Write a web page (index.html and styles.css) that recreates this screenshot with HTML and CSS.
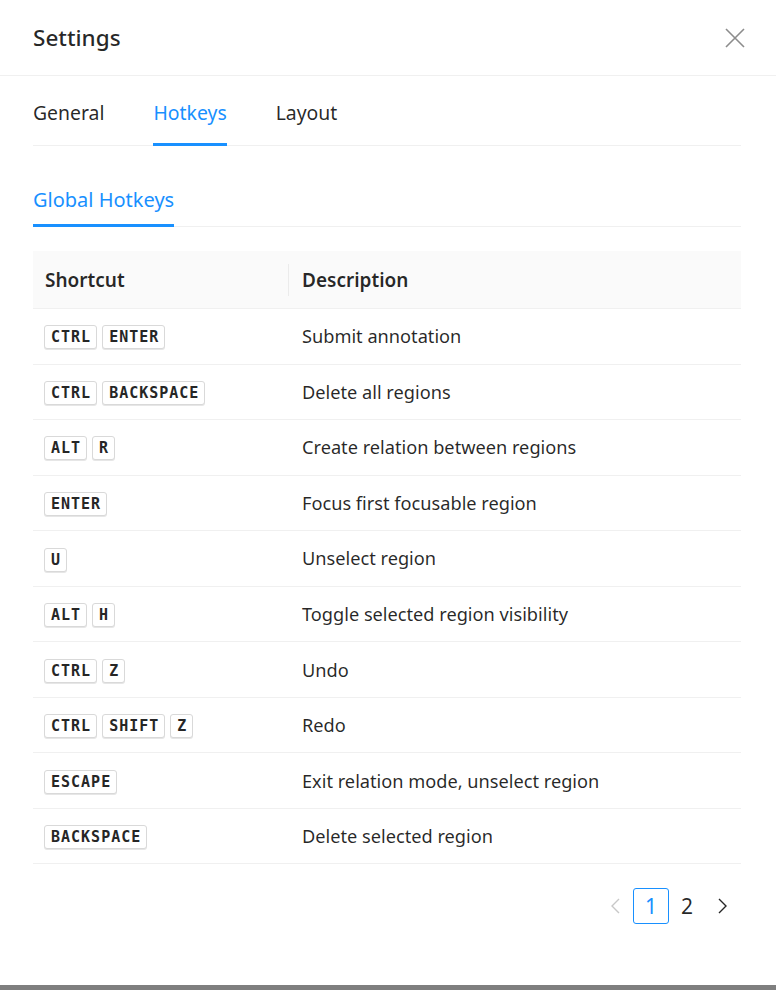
FILE: index.html
```html
<!DOCTYPE html>
<html lang="en">

<head>
    <meta charset="UTF-8">
    <meta name="viewport" content="width=device-width, initial-scale=1.0">
    <title>Settings</title>
    <link rel="stylesheet" href="styles.css">
</head>

<body>
    <div class="modal">
        <div class="modal-header">
            <div class="modal-title">Settings</div>
            <button class="modal-close" aria-label="Close">
                <svg width="20" height="20" viewBox="0 0 20 20">
                    <path d="M1 1 L19 19 M19 1 L1 19" stroke="#8c8c8c" stroke-width="1.6" fill="none" />
                </svg>
            </button>
        </div>
        <div class="modal-body">
            <div class="tabs main">
                <div class="tab">General</div>
                <div class="tab active">Hotkeys</div>
                <div class="tab">Layout</div>
            </div>

            <div class="tabs sub">
                <div class="tab active">Global Hotkeys</div>
            </div>

            <table class="hotkeys">
                <thead>
                    <tr>
                        <th class="col-key">Shortcut</th>
                        <th>Description</th>
                    </tr>
                </thead>
                <tbody>
                    <tr>
                        <td><kbd>CTRL</kbd><kbd>ENTER</kbd></td>
                        <td>Submit annotation</td>
                    </tr>
                    <tr>
                        <td><kbd>CTRL</kbd><kbd>BACKSPACE</kbd></td>
                        <td>Delete all regions</td>
                    </tr>
                    <tr>
                        <td><kbd>ALT</kbd><kbd>R</kbd></td>
                        <td>Create relation between regions</td>
                    </tr>
                    <tr>
                        <td><kbd>ENTER</kbd></td>
                        <td>Focus first focusable region</td>
                    </tr>
                    <tr>
                        <td><kbd>U</kbd></td>
                        <td>Unselect region</td>
                    </tr>
                    <tr>
                        <td><kbd>ALT</kbd><kbd>H</kbd></td>
                        <td>Toggle selected region visibility</td>
                    </tr>
                    <tr>
                        <td><kbd>CTRL</kbd><kbd>Z</kbd></td>
                        <td>Undo</td>
                    </tr>
                    <tr>
                        <td><kbd>CTRL</kbd><kbd>SHIFT</kbd><kbd>Z</kbd></td>
                        <td>Redo</td>
                    </tr>
                    <tr>
                        <td><kbd>ESCAPE</kbd></td>
                        <td>Exit relation mode, unselect region</td>
                    </tr>
                    <tr>
                        <td><kbd>BACKSPACE</kbd></td>
                        <td>Delete selected region</td>
                    </tr>
                </tbody>
            </table>

            <ul class="pagination">
                <li class="page-item arrow disabled">
                    <svg width="12" height="16" viewBox="0 0 12 16">
                        <path d="M10 1 L3 8 L10 15" stroke="currentColor" stroke-width="1.4" fill="none" />
                    </svg>
                </li>
                <li class="page-item active">1</li>
                <li class="page-item">2</li>
                <li class="page-item arrow">
                    <svg width="12" height="16" viewBox="0 0 12 16">
                        <path d="M2 1 L9 8 L2 15" stroke="currentColor" stroke-width="1.4" fill="none" />
                    </svg>
                </li>
            </ul>
        </div>
    </div>
    <div class="backdrop"></div>
</body>

</html>
```

FILE: styles.css
```css
body {
    margin: 0;
    font-family: "Noto Sans", sans-serif;
    color: rgba(0, 0, 0, 0.85);
    background: #fff;
}

.modal {
    height: 985px;
    background: #fff;
}

.modal-header {
    display: flex;
    align-items: center;
    justify-content: space-between;
    height: 75px;
    padding: 0 31px 0 33px;
    border-bottom: 1px solid #f0f0f0;
}

.modal-title {
    font-size: 22.5px;
    font-weight: 500;
}

.modal-close {
    border: none;
    background: none;
    padding: 0;
    display: flex;
    cursor: pointer;
}

.modal-body {
    padding: 0 35px 0 33px;
}

/* tabs */

.tabs {
    display: flex;
    align-items: flex-end;
    gap: 49px;
    border-bottom: 1px solid #f0f0f0;
}

.tab {
    line-height: 28px;
    border-bottom: 3px solid transparent;
    margin-bottom: -1px;
}

.tab.active {
    color: #1890ff;
    border-bottom-color: #1890ff;
}

.tabs.main {
    height: 69px;
}

.tabs.main .tab {
    font-size: 19.4px;
    padding-bottom: 16px;
}

.tabs.sub {
    height: 80px;
}

.tabs.sub .tab {
    font-size: 20px;
    padding-bottom: 10px;
}

/* table */

.hotkeys {
    width: 100%;
    border-collapse: collapse;
    margin-top: 24px;
    font-size: 18.2px;
}

.hotkeys th {
    background: #fafafa;
    text-align: left;
    font-weight: 600;
    font-size: 19px;
    height: 57px;
    padding: 0 12px;
    border-bottom: 1px solid #f0f0f0;
    position: relative;
}

.hotkeys th.col-key {
    width: 232px;
}

.hotkeys th.col-key::after {
    content: "";
    position: absolute;
    right: 0;
    top: 50%;
    height: 32px;
    margin-top: -16px;
    border-right: 1px solid #ebebeb;
}

.hotkeys td {
    height: 54.56px;
    padding: 0 12px 0 11px;
    border-bottom: 1px solid #f0f0f0;
}

.hotkeys td + td,
.hotkeys th + th {
    padding-left: 13px;
}

kbd {
    display: inline-block;
    font-family: "DejaVu Sans Mono", monospace;
    font-weight: bold;
    font-size: 15px;
    letter-spacing: 1px;
    line-height: 22px;
    padding: 0 5px 0 6px;
    margin-right: 5px;
    border: 1px solid #d9d9d9;
    border-radius: 3px;
    background: #fff;
    box-shadow: 0 1px 0 #e6e6e6;
    color: #262626;
    vertical-align: middle;
}

/* pagination */

.pagination {
    list-style: none;
    display: flex;
    justify-content: flex-end;
    align-items: center;
    margin: 24px 0 0;
    padding: 0;
    font-size: 21px;
}

.page-item {
    width: 34px;
    height: 34px;
    display: flex;
    align-items: center;
    justify-content: center;
    border: 1px solid transparent;
    border-radius: 3px;
}

.page-item.active {
    border-color: #1890ff;
    color: #1890ff;
}

.page-item.arrow {
    color: rgba(0, 0, 0, 0.85);
}

.page-item.disabled {
    color: #c8c8c8;
}

.backdrop {
    height: 5px;
    background: #7f7f7f;
}
```
